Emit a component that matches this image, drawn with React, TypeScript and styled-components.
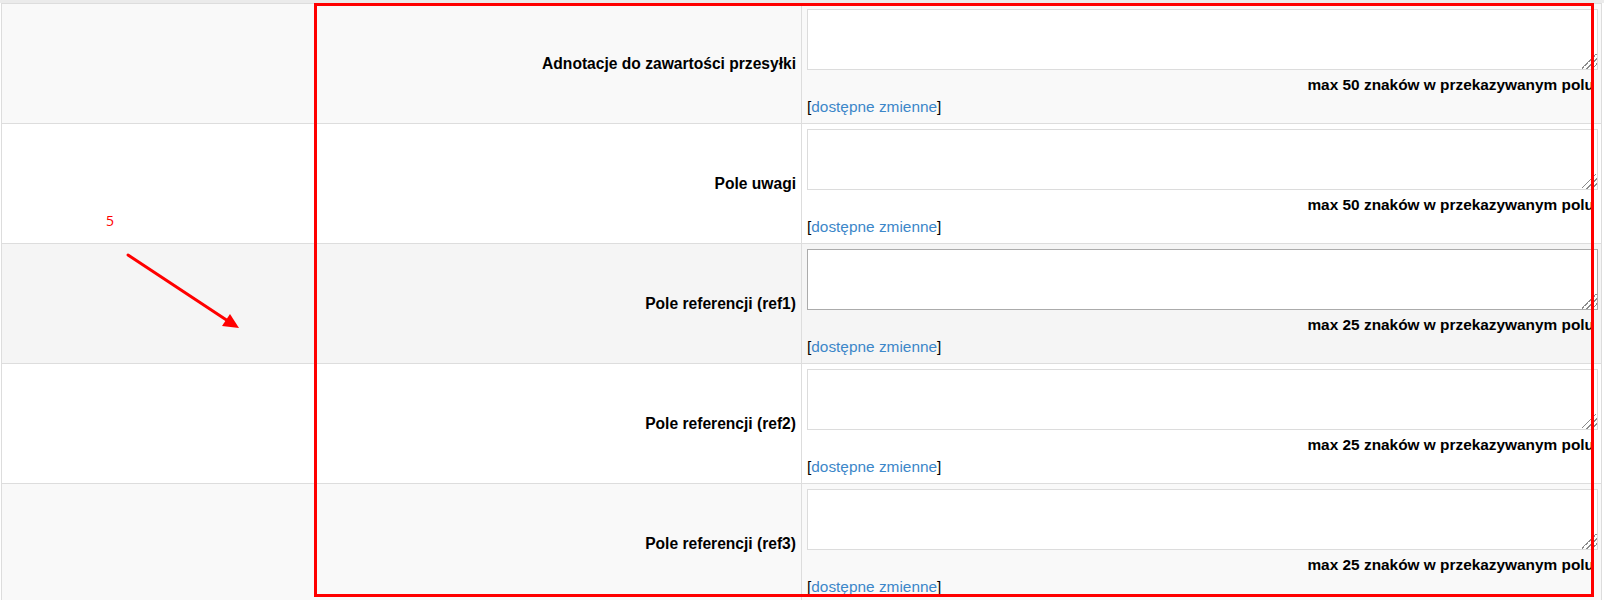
import React from 'react';
import styled, { createGlobalStyle } from 'styled-components';

const GlobalStyle = createGlobalStyle`
  html, body {
    margin: 0;
    padding: 0;
    background: #fff;
    overflow: hidden;
  }
  body {
    font-family: "Liberation Sans", Arial, sans-serif;
    font-size: 15.4px;
    color: #000;
  }
`;

const Page = styled.div`
  position: relative;
  width: 1604px;
  height: 600px;
  overflow: hidden;
`;

const TopStrip = styled.div`
  height: 3px;
  background: #ebebeb;
`;

const Table = styled.div`
  margin-left: 1px;
  width: 1601px;
  box-sizing: border-box;
  border: 1px solid #ddd;
  border-bottom: none;
`;

const Row = styled.div<{ $bg: string }>`
  display: grid;
  grid-template-columns: 800px 1fr;
  height: 120px;
  box-sizing: border-box;
  border-bottom: 1px solid #ddd;
  background: ${(p) => p.$bg};
`;

const LabelCell = styled.div`
  display: flex;
  align-items: center;
  justify-content: flex-end;
  padding-right: 5px;
  border-right: 1px solid #ddd;
  font-weight: bold;
  font-size: 15.6px;
`;

const FieldCell = styled.div`
  padding: 5px 3px 5px 5px;
`;

const Textarea = styled.textarea<{ $active?: boolean }>`
  display: block;
  width: 100%;
  height: 61px;
  margin: 0 0 4px;
  box-sizing: border-box;
  border: 1px solid ${(p) => (p.$active ? '#ababab' : '#dcdcdc')};
  background: #fff;
  outline: none;
  resize: both;
  overflow: auto;
  font-family: "Liberation Sans", Arial, sans-serif;

  &::-webkit-resizer {
    background: linear-gradient(
      135deg,
      transparent 0 44%,
      #8a8a8a 44% 50%,
      transparent 50% 62%,
      #8a8a8a 62% 68%,
      transparent 68% 80%,
      #8a8a8a 80% 86%,
      transparent 86%
    );
  }
`;

const Limit = styled.div`
  text-align: right;
  padding-right: 4px;
  font-weight: bold;
  line-height: 22px;
`;

const Vars = styled.div`
  line-height: 22px;
  color: #000;

  a {
    color: #3c87c9;
    text-decoration: none;
  }
`;

const Frame = styled.div`
  position: absolute;
  left: 314px;
  top: 3px;
  width: 1280px;
  height: 594px;
  box-sizing: border-box;
  border: 3px solid #ff0000;
  pointer-events: none;
`;

const Marker = styled.div`
  position: absolute;
  left: 106px;
  top: 211px;
  font-family: "Open Sans", sans-serif;
  font-size: 14px;
  font-weight: 400;
  color: #ff0000;
`;

const Arrow = styled.svg`
  position: absolute;
  left: 120px;
  top: 248px;
`;

interface Field {
  label: string;
  max: number;
  bg: string;
  active?: boolean;
}

const fields: Field[] = [
  { label: 'Adnotacje do zawartości przesyłki', max: 50, bg: '#f9f9f9' },
  { label: 'Pole uwagi', max: 50, bg: '#ffffff' },
  { label: 'Pole referencji (ref1)', max: 25, bg: '#f5f5f5', active: true },
  { label: 'Pole referencji (ref2)', max: 25, bg: '#ffffff' },
  { label: 'Pole referencji (ref3)', max: 25, bg: '#f9f9f9' },
];

export default function App() {
  return (
    <>
      <GlobalStyle />
      <Page>
        <TopStrip />
        <Table>
          {fields.map((f, i) => (
            <Row key={i} $bg={f.bg}>
              <LabelCell>{f.label}</LabelCell>
              <FieldCell>
                <Textarea $active={f.active} />
                <Limit>max {f.max} znaków w przekazywanym polu</Limit>
                <Vars>
                  [<a href="#">dostępne zmienne</a>]
                </Vars>
              </FieldCell>
            </Row>
          ))}
        </Table>

        <Marker>5</Marker>
        <Arrow width="130" height="90" viewBox="0 0 130 90">
          <line x1="8" y1="7" x2="108" y2="73" stroke="#ff0000" strokeWidth="3" strokeLinecap="round" />
          <polygon points="119,80 102,78 110,66" fill="#ff0000" />
        </Arrow>
        <Frame />
      </Page>
    </>
  );
}
